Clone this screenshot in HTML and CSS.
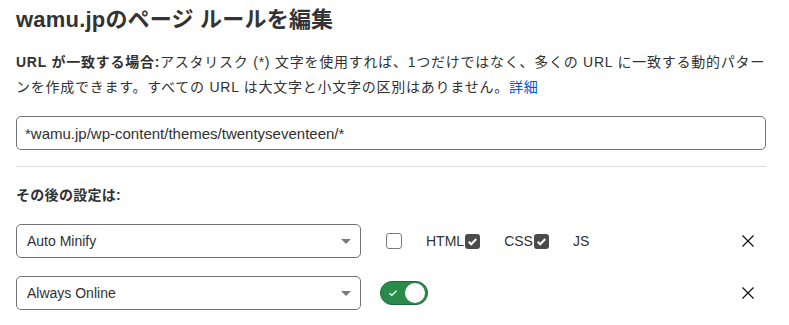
FILE: index.html
```html
<!DOCTYPE html>
<html lang="ja">
<head>
  <meta charset="UTF-8">
  <title>ページ ルールを編集</title>
  <link rel="stylesheet" href="styles.css">
</head>
<body>
  <div class="page">
    <h1 class="title">wamu.jpのページ ルールを編集</h1>
    <p class="help">
      <strong>URL が一致する場合:</strong>アスタリスク (*) 文字を使用すれば、1つだけではなく、多くの URL に一致する動的パターンを作成できます。すべての URL は大文字と小文字の区別はありません。<a href="#" class="link">詳細</a>
    </p>
    <input class="url-input" type="text" value="*wamu.jp/wp-content/themes/twentyseventeen/*">
    <hr class="divider">
    <h3 class="section-label">その後の設定は:</h3>

    <div class="setting-row">
      <div class="select">
        <span>Auto Minify</span>
        <span class="caret"></span>
      </div>
      <div class="options">
        <span class="box"></span>
        <label class="opt">HTML<span class="box checked"><svg viewBox="0 0 16 16"><path d="M4 8.3l2.6 2.6L12 5.4" /></svg></span></label>
        <label class="opt">CSS<span class="box checked"><svg viewBox="0 0 16 16"><path d="M4 8.3l2.6 2.6L12 5.4" /></svg></span></label>
        <label class="opt">JS</label>
      </div>
      <button class="remove" aria-label="削除"><svg viewBox="0 0 12 12"><path d="M0.5 0.5L11.5 11.5M11.5 0.5L0.5 11.5" /></svg></button>
    </div>

    <div class="setting-row">
      <div class="select">
        <span>Always Online</span>
        <span class="caret"></span>
      </div>
      <div class="options">
        <span class="toggle"><svg class="tick" viewBox="0 0 12 12"><path d="M2.5 6.2l2.3 2.2L9.5 3.8" /></svg><span class="knob"></span></span>
      </div>
      <button class="remove" aria-label="削除"><svg viewBox="0 0 12 12"><path d="M0.5 0.5L11.5 11.5M11.5 0.5L0.5 11.5" /></svg></button>
    </div>
  </div>
</body>
</html>
```

FILE: styles.css
```css
body {
  margin: 0;
  padding: 0;
  background: #fff;
  color: #313131;
  font-family: "Liberation Sans", "Noto Sans CJK JP", sans-serif;
  font-size: 14px;
}
.page {
  width: 750px;
  padding: 5px 0 0 16px;
}
.title {
  margin: 0;
  font-size: 22px;
  line-height: 30px;
  font-weight: 600;
  letter-spacing: 0.2px;
  color: #333;
}
.help {
  margin: 15px 0 0;
  line-height: 25px;
  letter-spacing: 0.75px;
}
.help strong {
  font-weight: 700;
}
.link {
  color: #0055dc;
  text-decoration: none;
}
.url-input {
  display: block;
  box-sizing: border-box;
  width: 750px;
  height: 34px;
  margin: 16px 0 0;
  padding: 0 8px;
  border: 1px solid #6f7377;
  border-radius: 5px;
  font-family: inherit;
  font-size: 15px;
  color: #313131;
}
.divider {
  margin: 16px 0 0;
  border: 0;
  border-top: 1px solid #dadada;
}
.section-label {
  margin: 16px 0 0;
  font-size: 14px;
  line-height: 25px;
  font-weight: 700;
  letter-spacing: 0.3px;
}
.setting-row {
  display: flex;
  align-items: center;
  margin-top: 18px;
}
.section-label + .setting-row {
  margin-top: 16px;
}
.select {
  box-sizing: border-box;
  width: 345px;
  height: 34px;
  display: flex;
  align-items: center;
  justify-content: space-between;
  padding: 0 9px 0 10px;
  border: 1px solid #6f7377;
  border-radius: 5px;
}
.caret {
  width: 0;
  height: 0;
  border-left: 5px solid transparent;
  border-right: 5px solid transparent;
  border-top: 5px solid #7a7a7a;
}
.options {
  flex: 1;
  display: flex;
  align-items: center;
  padding-left: 19px;
}
.box {
  box-sizing: border-box;
  width: 16px;
  height: 16px;
  margin-left: 6px;
  border: 1px solid #7a7a7a;
  border-radius: 3px;
  display: inline-flex;
}
.box.checked {
  width: 15px;
  height: 15px;
  margin-left: 1px;
  border: 0;
  background: #4b4b4b;
}
.box svg {
  width: 15px;
  height: 15px;
  fill: none;
  stroke: #fff;
  stroke-width: 2.2;
}
.opt {
  display: inline-flex;
  align-items: center;
  margin-left: 24px;
  font-size: 14px;
  color: #333;
}
.opt + .opt {
  margin-left: 24px;
}
.toggle {
  box-sizing: border-box;
  position: relative;
  width: 48px;
  height: 24px;
  border: 1px solid #1c6b38;
  border-radius: 12px;
  background: #2a8a4a;
}
.tick {
  position: absolute;
  left: 6px;
  top: 5px;
  width: 12px;
  height: 12px;
  fill: none;
  stroke: #fff;
  stroke-width: 1.4;
}
.knob {
  position: absolute;
  right: 2px;
  top: 1px;
  width: 20px;
  height: 20px;
  border-radius: 50%;
  background: #fff;
}
.remove {
  width: 12px;
  height: 12px;
  margin-right: 12px;
  padding: 0;
  border: 0;
  background: none;
  display: flex;
}
.remove svg {
  width: 12px;
  height: 12px;
  fill: none;
  stroke: #111;
  stroke-width: 1.2;
}
```
